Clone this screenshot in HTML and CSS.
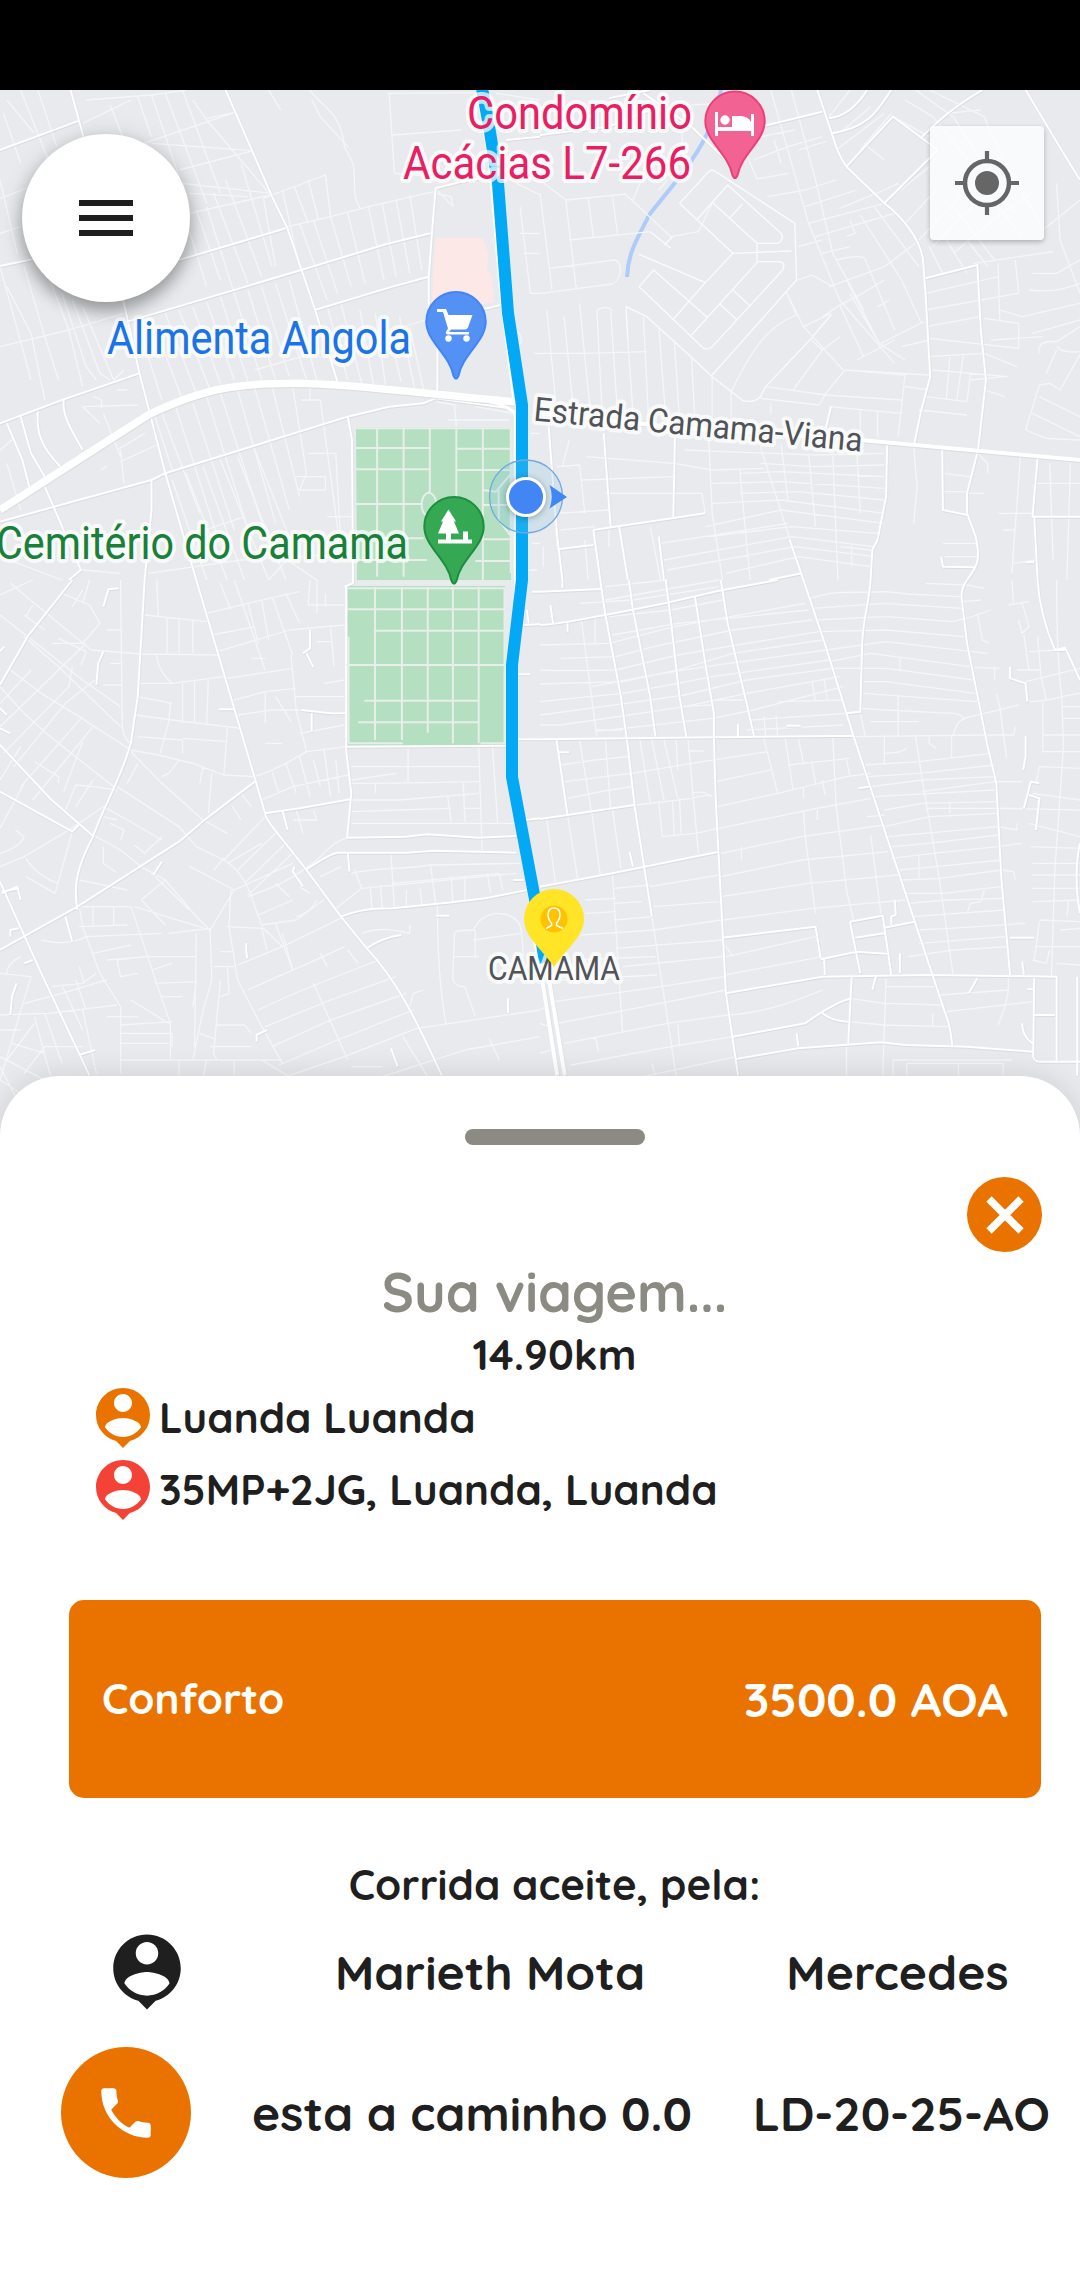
FILE: index.html
```html
<!DOCTYPE html>
<html lang="pt">
<head>
<meta charset="utf-8">
<title>Sua viagem</title>
<link rel="stylesheet" href="styles.css">
</head>
<body>
<div class="status-bar"></div>
<main class="map">
  <svg class="map-canvas" viewBox="0 90 1080 1060" width="1080" height="1060">
    <defs>
      <path id="pin" d="M0-29.5A29.7 29.7 0 0 0-29.7 0C-29.7 20-7 32-2.6 54Q0 60 2.6 54C7 32 29.7 20 29.7 0A29.7 29.7 0 0 0 0-29.5Z"/>
    </defs>

    <!-- parks and blocks -->
    <path class="park" d="M356 427.500H511V580H357ZM348 586H505V745.500H348Z"/>
    <path class="clinic" d="M435 238H483L489 255 487 270 492 275 494 302 431 314Z"/>
    <path class="river" d="M721 90C715 130 693 160 674 184L649 215C640 235 628 250 627 277"/>

    <!-- north-west -->
    <g transform="translate(0 80) scale(.34439 .33333)">
      <g class="minor">
        <path d="M0 355 110 312M0 460 60 440M60 30 140 240M110 30 165 200M10 100 60 250M0 300 50 520M20 60 100 160M250 60 440 45 540 30M240 130 380 60M320 75 360 180M400 50 440 170M440 45 520 290M480 40 600 370M530 30 640 340"/>
        <path d="M390 200 680 98M440 190 735 212M520 270 735 212M530 310 790 340M550 340 720 350M550 400 785 345M560 60 600 120 790 350M600 115 680 98"/>
        <path d="M540 420 600 620M570 390 640 600M600 380 680 640M620 340 720 610M655 300 760 590M700 250 790 560M765 355 800 560M820 330 870 560M855 320 895 430M895 300 925 420M765 355 790 345 945 285 960 410M835 440 960 410 1070 380 1260 335"/>
        <path d="M870 430 950 660M910 420 980 640M960 410 1020 620M1010 400 1060 610M1070 380 1115 600M1110 370 1150 590M1150 360 1190 580M1190 345 1225 570"/>
        <path d="M900 30C930 80 990 90 1000 200L1025 250C1035 300 1020 340 1045 385M905 60 930 110 1010 200M1130 40 1145 280M1140 165 1340 150M1125 40 1390 38M1145 280 1250 290M1265 325 1315 380 1310 350 1265 340"/>
        <path d="M0 800 60 785 200 750 360 700M0 560 60 785 90 900M20 620 90 760 130 960M70 560 130 770 170 900M130 560 200 750 240 920M180 640 250 860 280 900M210 660 290 880 320 900M240 680 330 900 360 870"/>
        <path d="M400 730 470 960M440 715 530 960M480 700 570 940M520 690 610 930M560 680 640 910M600 665 680 900M640 650 720 905M680 640 760 900M720 630 800 900M760 620 840 890M800 610 890 900M840 600 920 900M740 870 1050 780 1235 720M950 680 1010 900M990 670 1050 910M1045 690 1085 920M1090 700 1120 920M1125 740 1165 905M1160 710 1205 930M1190 740 1230 930"/>
        <path d="M240 980 400 975M270 950 295 960V985M340 930 370 930M240 980 290 1030M340 1110 420 1060M350 1145 455 1095M300 1000 350 1130M290 1170 310 1160M0 1110 40 1075M20 1150 60 1290M350 1110 360 1210"/>
        <path d="M450 1010 500 1170M470 1000 580 1300M510 980 640 1400M560 970 680 1350M600 950 730 1380M640 940 770 1360M690 930 800 1330M740 925 840 1290M790 920 870 1250M850 920 890 1180 870 1230H945V1190L860 1190M875 960H930M900 920V960M895 1120H975L990 1400M950 1310H1020M930 960 985 1380M1300 1020H1480M1380 980 1490 1000M1265 965 1320 975 1325 1040"/>
        <path d="M500 1200 600 1500M540 1180 660 1500M590 1160 710 1500M640 1140 780 1500M690 1130 830 1500M740 1110 870 1450M540 1370 710 1310M430 1480 700 1440 1020 1420M780 1500 850 1420M820 1430 920 1500M0 1430 180 1500M240 1470 350 1480"/>
        <path d="M1510 460H1568M1520 520H1568M1510 380 1540 640M1540 640H1568M1490 750C1520 760 1520 790 1500 800M1550 820H1568M1470 150 1568 100M1460 200 1568 280M1500 310 1568 345M1540 1060H1568M1540 1200 1568 1210M1545 1390H1568M1535 1470H1560M780 30 815 90M1440 40 1568 60"/>
      </g>
      <g class="street">
        <path d="M205 30 245 180 360 670 405 880 480 1180 570 1500M0 210 230 122M0 558 130 530M520 540 830 445M655 30 790 350 835 445 915 690 980 905M370 725 875 570 1120 493 1250 460M915 690 1130 623 1245 590M1265 325 1340 305 1420 290M1265 325 1255 450 1245 590V690L1270 760V935M1455 675 1350 700"/>
        <path d="M0 1030 180 960 405 880M185 960C180 1000 200 1040 240 1110M60 1010 90 1120 130 1190M110 995C105 1060 120 1100 175 1160M20 1030 65 1140 85 1220M0 1325 440 1200 480 1180 1010 1010 1130 980 1230 970 1265 955M440 1200 440 1290 420 1500M130 1220 235 1470 200 1500M1010 1010 1022 1080 1025 1500"/>
        <path d="M1385 40 1420 250 1450 620 1490 960M1495 990V1500M1470 180 1568 170M1265 955 1480 985"/>
      </g>
      <path class="avenue" d="M0 1290 430 1005C600 920 700 910 860 910S1300 950 1495 965"/>
      <path class="ramp" d="M1420 965C1460 970 1480 985 1495 1000"/>
      <g class="park-path">
        <path d="M1033 1045H1483V1480M1095 1045V1490M1172 1045V1490M1248 1045V1240M1325 1045V1250M1402 1045V1500M1033 1104H1250M1325 1106H1480M1033 1168H1250M1325 1170H1480M1033 1272H1225M1400 1275H1480M1033 1375H1230M1400 1378H1490M1033 1440H1240M1380 1443H1490M1400 1230 1440 1235 1485 1180M1448 1230V1320L1485 1370M1245 1238C1220 1240 1215 1300 1245 1310S1275 1240 1245 1238"/>
      </g>
    </g>

    <!-- north-east -->
    <g transform="translate(540 80) scale(.34439 .33333)">
      <g class="minor">
        <path d="M0 300 75 360 250 342M0 340 35 630M75 360 105 625M140 355 155 470M210 345 225 460M85 480 320 455M30 565 215 540C240 540 240 600 210 612L0 640M245 340 380 470 460 455 500 370M270 360 290 310M345 330 370 300M410 130 420 300M440 75 520 70"/>
        <path class="lane" d="M405 370 490 275Q500 265 515 278L740 430 745 600 500 885M405 370 560 520 480 608 288 523M455 420 545 315 700 460Q710 480 690 490H630L500 367M550 415 588 372M630 490V548L440 765M560 520 730 513M320 455 380 505M360 495 385 470M288 620 330 570 485 712 M288 620 470 800Q485 815 500 800L705 570Q715 545 690 545H630M388 717 480 608M520 670 572 720M560 630 608 676M250 680 310 710 440 832 500 890 590 962Q620 970 640 950L655 920 785 778 845 705 M250 680 255 780"/>
        <path d="M670 30 780 430 870 660 1030 850M730 30 800 300 850 520 940 690M590 200 630 297 720 280M620 240 720 200 820 170M640 170 740 150M660 350 770 330 860 300M680 180 700 250M750 210 830 185M770 380 920 330M780 430 1000 370M800 470 1030 400M750 500 820 480M870 385 1000 330 1040 310M820 520 900 500M840 620 1000 560 1090 490M860 540Q940 520 945 540L1030 750M890 600 985 790M930 405 1050 600 1105 725M970 380 1100 560M900 420 915 460 890 470M750 600 790 585 850 620M820 710 870 675 920 650 1000 600M765 740 845 700M715 635 765 740 880 870M870 675 940 830M900 640 985 790 1060 840M980 680 1015 660M990 790 1115 725M1050 800 1130 780M920 840 1030 780M745 705 715 635M745 705C650 740 600 840 555 935M785 778 820 810 735 930M820 810 870 770M655 920 830 945 1050 960M640 955 810 975 830 940 885 870 1130 885M500 890V1010M555 935V1010M885 870 1060 885 1040 1070M670 970V1000M1060 920 1130 930"/>
        <path d="M840 110 900 30M870 160 960 80M860 210 1000 100M890 260 960 330M930 210 1020 100M940 190 1000 240M1025 110 1130 170M1060 60 1140 110 1260 260M1090 30 1200 110 1380 400M1130 30 1290 110 1310 160 1420 380M1180 100 1280 90M1000 370 1130 260M1060 430 1150 330M1100 480 1220 350 1340 230M1140 500 1300 330 1360 260M1200 520 1340 400 1440 330M1130 500 1170 580M1180 480 1240 580M1240 480 1300 560M1200 380 1320 540M1300 340 1400 470M1380 280 1460 450 1568 360M1260 550 1490 515M1120 640 1330 590M1120 690 1390 640M1120 740 1280 710M1130 775 1390 805V730L1290 715M1380 540 1390 640M1330 550 1335 720M1500 310 1510 480 1568 640M1430 580 1500 580 1568 540M1420 630Q1500 640 1568 610M1335 690 1400 710 1568 670M1430 760 1568 720M1450 820Q1440 780 1500 785L1568 740M1500 800Q1520 820 1568 815M1570 820 1510 930M1500 810 1470 880M1450 915 1480 910 1510 930M1450 915 1410 1050 1470 1075 1568 1080M1450 950 1568 1010M1430 1000 1568 1070M1130 830 1290 820M1140 870 1360 890M1290 820 1385 860M1230 820 1210 960M1190 830 1180 960M1120 950 1240 965 1250 880M1100 990 1240 1005M1290 930 1350 950M840 980 1050 1000M930 990V1070M980 990V1070M1310 780 1460 770M1250 900 1350 890"/>
        <path d="M20 690 45 960M70 710 95 970M115 670 130 830 145 980M165 690 180 990M205 690 225 1000M165 690 Q190 675 210 690M255 780 270 1000M300 710 315 1010M345 740 365 1010M390 780 405 1020M440 830 450 1030M0 820H130L310 815"/>
        <path d="M25 1040 50 1400M85 1080 65 1160M50 1160 115 1155 130 1300M135 1130 390 1150 500 1170 650 1165M120 1200 390 1190M190 1240 470 1240 480 1300M50 1300 200 1290M60 1350 160 1340M640 1100 760 1490M490 1080 500 1300 530 1500M580 1170 610 1500M700 1090 720 1260M780 1120 800 1340M850 1120 865 1500M920 1110 930 1300M420 1110 800 1125 1000 1120M640 1150 790 1160 1000 1155M580 1180 700 1175 1000 1190M500 1210 700 1205 1000 1225M580 1240 750 1235 1000 1260M500 1270 700 1260 1000 1300M480 1340 700 1290 1000 1330M490 1370 730 1340 980 1360M350 1390 600 1350 720 1330M360 1440 730 1370 970 1400M370 1470 740 1400 970 1430M540 1480 750 1430 960 1460M1085 1100 1095 1220 1085 1330M1240 1240H1290M1270 1120 1300 1150V1180M1170 1180 1250 1190M1170 1235H1240M1330 1300H1430M1395 1130 1370 1480M1480 1150 1490 1440M1540 1150 1530 1500M1440 1210H1568M1345 1350H1380M1375 1450 1440 1440M1170 1390H1270M1175 1430H1270M870 1400 960 1410M905 1390V1460M130 1380 140 1500M200 1350V1400M320 1340 350 1500M10 1400V1460"/>
      </g>
      <g class="street">
        <path d="M0 165 200 140 320 90M320 30 200 55M300 40 440 140 540 240M640 140 820 95M805 30 860 200Q875 240 890 260L1000 370C1050 410 1110 480 1113 550L1120 650 1133 890 1105 1000 1087 1090M1285 30C1200 80 1150 130 1110 170M1020 30C980 90 960 140 850 160M950 30C920 80 880 110 840 115M890 260 1025 110 1155 210 1000 370M1410 30 1520 220 1568 300M1120 595 1270 555 1280 750 1295 900 1272 1110 1240 1240 1240 1300 1265 1370C1280 1440 1270 1460 1240 1500M1168 1110 1170 1290 1240 1305M1165 1430 1170 1460 1260 1462M1008 1095 1005 1250 980 1380 965 1410 960 1500M845 980 830 1045M1445 1135 1430 1310H1568M1435 1310 1445 1500M1410 1447H1435"/>
        <path d="M185 1060 205 1340M392 1075 387 1310M155 1350 480 1300M155 1350 175 1500M230 1340 255 1500M345 1370 360 1500M725 1380 765 1500M50 1408 155 1395M25 1040 50 1370 65 1500M665 1500 760 1480"/>
      </g>
      <path class="avenue-thin" d="M0 1000 420 1045 930 1080 1568 1140"/>
    </g>

    <!-- south-west -->
    <g transform="translate(0 580) scale(.34439 .33333)">
      <g class="minor">
        <path d="M0 45 95 0M30 10 170 130 265 210M0 105 130 210 240 300 350 380M70 170 170 260 350 440M30 270 120 340 230 410 380 510M0 320 70 400 140 465 330 620M75 110 95 75M70 105 130 150M180 40 260 75 290 130 240 190 150 190M240 70 260 0M170 175 250 215 235 255M210 80 240 30M0 370 90 270M0 440 180 260 250 190M10 520 200 320 210 260M40 560 190 370 275 300M60 620 240 410M95 660 270 440M100 545 170 590V610M185 635 240 485M0 745 75 600M0 600 60 500"/>
        <path d="M220 615 270 620 340 630M220 615 190 690M340 620 430 680 520 740 570 800 650 840M300 680 370 720 470 780M270 600 220 680M380 515 470 610 590 720 660 760M400 550 370 610M300 710 340 720M320 730 360 750 350 780M270 765 350 810 410 860 480 900M300 800V850L335 875M390 795 420 820 470 770M75 835Q110 890 170 910M0 860 70 830 200 750 300 680M0 820Q60 800 70 770L45 750M75 890 160 940M160 940 210 755"/>
        <path d="M350 0 355 440Q360 480 380 490M310 150H355M320 250H355M300 315 355 315M265 210 410 222 640 225M420 105 600 125M455 0 460 110M485 115V220M520 120V220M560 120V220M400 350 500 370M455 225C460 270 480 290 500 310L400 310M500 310 650 290M530 310V430M565 305V430M605 300 600 430M495 370 490 430M395 405 500 420 700 445M490 425 465 520M400 470 530 480M530 480V520M530 475 660 485M660 445 650 585M380 510 460 525 560 550 650 585 740 590M520 540 490 580 470 590M590 560 580 610M615 580 605 700"/>
        <path d="M600 100 740 65 870 35M640 10 670 90M680 0 770 270M720 70 750 190M760 60 780 180M790 50 850 225M830 40 870 130M615 165 740 140M630 215 840 150 1000 135M660 295 850 265M730 235H770M680 360 770 335 860 325M690 405 790 390 870 390M770 335V430M800 350 845 425M845 225 860 390 890 515M770 490H820M855 350H1000M870 460 1000 435M900 0 895 75M895 75H1000M920 100V0M945 40V80M920 185H960M960 145 970 260M940 310 1000 300M740 590C800 570 850 540 890 515L1005 500M760 660 850 620 1010 585M790 575 810 640M830 550 860 640M870 530 900 650M910 540 930 620M940 505 960 650M975 540 985 640M700 640 730 680M675 680 700 720"/>
        <path d="M770 710 650 840 665 850C690 870 720 910 740 980L760 1035M800 760 690 870M830 790 710 910M850 820 720 945M650 835 620 870M660 850 760 790M590 880 680 930 850 850M390 980 610 1050 680 930M410 960 480 900 570 1010 610 1050M410 960 480 1035M440 880 550 990M550 860 590 880M670 930 665 1040 690 1200 750 1320 820 1450M720 950C800 920 850 900 930 830Q980 775 1010 775M930 890 990 860M750 1005 850 960M860 1010Q900 1000 920 960M800 910 840 950M870 920 900 940M760 1035 860 1020 940 960M800 1030 850 1170M660 1040 760 1045 775 1110M640 1115H680"/>
        <path d="M230 900 370 930M225 980 380 980 390 1010C420 1100 450 1200 495 1330V1440M230 1040 370 1035M270 980V1035M330 980V1035M230 980 240 1040 290 1180 350 1280V1480M120 1080Q200 1100 250 1070L470 1060M270 1120 380 1095M340 1140 350 1190 400 1180M340 1140 380 1135M310 1140 430 1130 570 1130M440 1170 500 1150M450 1210 570 1205 560 1280M470 1250H530M490 1060 610 1045M570 1060 565 1400M610 1045 615 1200 590 1290 560 1440M620 1160H680M660 1160 665 1240 640 1250M640 1200 620 1420 630 1440"/>
        <path d="M0 1180 90 1190M20 1180Q20 1150 60 1130M90 1190 0 1500M0 1305 140 1300 340 1275M70 1270 180 1240 310 1200M150 1220 240 1210 280 1180M180 1215 240 1350M220 1200 250 1290M230 1160 245 1210M240 1290 280 1480M130 1300 180 1450M100 1310 150 1500M35 1390 130 1420M0 1430 130 1500M0 1350 60 1350M20 1440 100 1330M70 1480 130 1400H240M350 1440H820M350 1360H500V1400M350 1390H490M380 1260 490 1330M310 1310H400M350 1335 500 1325M580 1360 620 1375M630 1335H710L730 1360M610 1400H730M760 1440 840 1490M680 1440V1487M600 1440 590 1487M520 1440V1487M0 1500 60 1540M0 1460 50 1560"/>
        <path d="M720 1230C820 1180 860 1170 1000 1100M750 1290C850 1240 950 1200 1100 1140M770 1340 960 1260 1150 1190M790 1400 960 1320 1180 1240M810 1455 980 1380 1200 1290M830 1490 1000 1430 1210 1345 1568 1290M690 1155 820 1100 1000 1010M760 1040 820 1100M820 1060 850 1170M930 1120 950 1160M910 1210 1010 1440M1010 1110 1040 1150M1050 1060C1100 1040 1150 1050 1190 1060V1035M1170 1370 1240 1487M1110 1490 1350 1410 1568 1370M1420 1375 1450 1440M1020 1460H1110M1190 1280 1200 1240 1230 1230M1270 970C1270 1150 1280 1250 1295 1330"/>
        <path d="M1380 1310 1350 1220Q1310 1220 1315 1180L1320 1060Q1320 1050 1375 1050 1390 1010 1440 1000 1510 1000 1515 1060L1520 1130M1315 1130H1390M1380 1050V1130M1375 1080 1515 1060M1020 560H1390M1020 610H1110L1390 605M1020 600 1150 580M1020 660 1160 660 1390 640M1020 695 1160 690 1310 685M1020 730H1500M1185 505V605M1390 500 1400 810M1430 500 1445 730M1300 650 1310 725M1345 605 1350 725M1350 685H1395M1090 610V640M1135 820 1145 980M1030 870 1050 925 1500 880M1020 880C1100 860 1160 870 1250 855L1510 850M1250 855 1265 970M1140 910 1450 880M970 990 1050 925M1075 920 1080 985M1105 915 1110 985M1180 930V980M1220 925 1225 975M1310 890 1315 965M1350 890V960M1415 880 1425 940M1450 880 1460 930M850 720H920M860 690 880 760M910 690 920 720"/>
      </g>
      <g class="street">
        <path d="M210 0 80 170 0 315M420 0 400 350 380 490C350 600 300 680 270 770 230 850 210 910 225 990M0 495 150 660 270 768M0 635 210 755 228 735M0 1110 225 980 520 785 600 715 740 605M570 0 770 700C770 720 800 750 890 870L990 1010 1065 1105C1150 1200 1200 1300 1283 1487M0 905 120 1180 260 1487M1005 20 1005 510 1020 640 1008 773 1180 770 1240 763 1390 773 1500 768M890 868Q960 820 980 818H1180L1260 812 1500 818M990 1010C1030 995 1060 985 1140 985L1300 968 1410 955 1530 930M1065 1105C1100 1080 1130 1070 1165 1065M770 700 870 685 1018 658M820 690 835 750M1005 500 1470 497M1010 820 1015 875M1025 0V10L1000 20"/>
        <path d="M635 388H680M875 390 960 400H1003M905 400V455M900 150V205L880 220M890 220 910 262M855 860 850 875 880 920M445 885 470 845M190 1010 210 1085M715 1090V1115L718 1135M1135 1405 1155 1460M1475 1255V1300M1265 1007H1305M745 1385V1365L775 1350M300 215 285 250 280 315M300 80 315 28 345 25M5 940 50 920 60 960M5 935 55 925M30 1070V1050L55 1045M230 1425 277 1410M70 1150 95 1140M48 1210 35 1250 30 1305M0 385 20 405M0 445 30 460M0 215 12 200"/>
        <path d="M1495 60V0M1520 135 1568 133M1505 283H1540M1500 478H1568M1525 720 1568 715M1530 90 1535 130M1545 35H1568M1500 730 1560 1100M1490 900H1520"/>
      </g>
      <g class="park-path">
        <path d="M1010 25H1465V490H1395M1010 88H1465M1085 152H1465M1005 255H1465M1058 362H1390M1040 427H1390M1012 490H1170M1089 20V480M1167 20V480M1242 20V458M1315 20V490M1390 20V490M1012 170V490M1040 10H1485"/>
      </g>
    </g>

    <!-- south-east -->
    <g transform="translate(540 580) scale(.34439 .33333)">
      <g class="minor">
        <path d="M190 20 370 0M190 60 520 0M115 70 270 60 520 20M200 110 380 90 530 60M0 195 200 190 390 140 770 70M210 165 400 130 780 90M60 235 220 230 330 200 560 150 790 120M0 270C100 275 130 270 220 270L400 225 600 190 810 155M0 312 240 305 400 270 560 220 820 180M150 320 300 290 480 260 830 210M0 365C50 360 150 350 240 340L400 310 500 290 840 240M0 405 250 370 420 345 600 300 850 265M0 435 60 435 160 420 420 380 600 340 870 290M160 455 500 415 620 390 880 320M500 360 590 360M410 380 500 375M165 450H240M610 420 890 400M600 450 880 435M690 365 880 360M790 305 800 365M825 300 835 360M120 120 165 470M160 110V190M650 410 655 470M685 405 690 465"/>
        <path d="M785 55C850 30 900 40 1005 35L1070 42 1220 50M790 85 1000 70 1225 85M800 120 1005 110 1200 125 1230 115M810 155 1005 150 1230 170M830 210 1005 185 1300 220M840 245 960 220 1250 260M850 265 1005 265 1260 300M940 305 1005 305 1265 340M940 340 1270 365M930 385 1005 390 1200 400Q1220 400 1230 415L1390 375M960 425H1100M930 400 945 470M1040 350V470M1045 230V275M1120 10 1240 15 1290 25M1225 65 1280 60M1225 120 1310 90M1270 100 1285 180 1305 190M1370 0 1375 70M1360 75 1420 65M1400 70 1420 140 1400 160 1390 120M1405 165 1420 270M1385 270H1450M1445 170 1455 290 1470 360M1420 215 1500 210M1320 260V300M1260 262 1335 265M1325 340 1335 380 1355 535M1410 305 1568 265M1420 365C1480 365 1520 345 1568 340M1460 365V515M1500 0C1500 100 1500 230 1515 350L1520 500 1495 870 1485 1190M1515 380H1568M1515 415H1568M1520 465H1568M1460 465H1520M1460 515H1568"/>
        <path d="M60 555 160 540 255 530M70 605 265 580 440 550 660 515M80 655 200 630 270 620M115 480 150 700M190 480 205 690M290 480 320 670M325 480 360 660M360 480 400 655M395 480 400 570M430 480 460 820M430 513H475M280 675 440 655Q500 640 500 650M440 640Q480 630 495 650M345 670 355 770 450 760 520 745M385 665 390 765M405 655 410 765M510 605 670 570M515 680 690 640 890 590 960 580M520 745 780 690 960 655M525 820 760 770 1000 735M525 890 760 840 1010 815M525 950 780 910 1040 885M530 1020 790 985 1060 960M330 980 520 965M320 920 520 885M530 1085 560 1130M330 1050 525 1020M540 1130 800 1070M535 1185 820 1130M650 475 690 640M712 475 735 630M750 475 765 550M720 555 900 535M790 550 800 610M850 470 860 680 890 930 910 1020M890 540 900 590M765 690 770 770 800 1000M820 600 828 645M805 690V720M765 620V655M585 800V840M960 765 990 1000M20 720 45 910M80 705 110 900M150 695 175 885M210 685 235 865"/>
        <path d="M915 470 1300 465 1375 465 1380 440M1200 465Q1210 420 1235 415M1195 465V535M1090 465 1110 600 1160 900 1200 1190M1130 465V490L1150 505M1000 470V550M1000 520Q1050 520 1065 505M945 555 1100 545 1310 520M950 590 1100 580 1320 555M960 620 1110 600 1320 590M970 650 1320 630M1000 690 1110 670 1330 665M1110 635 1320 605 1400 605M1120 685 1400 685M1000 740 1130 710 1330 700M1010 770 1330 740 1385 750V730M1020 800 1130 790 1330 765M1020 835 1140 820 1330 800 1400 790M1040 870 1150 860 1340 840M1050 900 1160 895 1340 870 1375 875 1380 900M1060 940 1170 940 1340 920M1070 970 1180 960 1345 955M1080 1010 1350 990M1090 1050 1190 1045 1410 1030M1100 1090 1350 1070M1070 1130 1200 1110 1360 1100M1100 825V895M1190 670V700M1290 930 1280 965 1250 970 1240 1000M950 710 1000 705"/>
        <path d="M1450 560 1568 565M1450 560 1440 610M1330 685 1568 690M1430 640 1568 660M1370 605H1400M1420 730 1568 770M1425 800 1568 805M1430 850H1568M1430 885H1568M1430 925H1568M1430 965 1568 960M1450 1020 1568 1025M1440 1100H1568M1430 1140 1470 1150 1480 1110M1450 1025 1435 1140M1510 1050 1568 1045M1500 1150 1568 1155M1535 960 1530 1010"/>
        <path d="M210 880 240 1360M325 1010 395 1487M215 925 320 915M130 960 220 955M215 970 295 965M215 1020 330 1010M130 1000 220 995M120 1065 330 1050M220 1105 530 1080M100 1140 335 1130M240 1160 530 1130M60 1200 340 1185M40 1265 350 1220 535 1190M50 1330 350 1270 540 1230M70 1390 370 1330 545 1305C650 1300 750 1260 820 1230M90 1455 380 1400 560 1370M300 1490 570 1430M160 1370 170 1415M400 1330 405 1395M325 1450 335 1487M1005 1195 995 1487M890 1400V1487M900 1255 1000 1270 1170 1275M895 1325 1000 1335 1190 1340M1005 1220 1145 1220M1160 1245 1360 1230M1180 1295 1430 1265M1360 1220Q1360 1260 1330 1335M1140 1300V1340M1025 1440H1370M1065 1450H1345V1487M1065 1450V1487M1025 1440V1487M1215 1450V1487M0 1330 25 1340M0 1420 30 1410M0 1290 20 1280M1360 1190V1225"/>
      </g>
      <g class="street">
        <path d="M0 478 510 472 910 467M0 135C80 130 100 120 190 105L370 68 520 32 690 0M0 35 180 27M65 0V25M175 0 190 105 235 350 255 500 275 680 325 1010M258 0 270 90 320 350 335 470M365 0 380 120 405 350 425 470M450 50 480 250 505 400 505 480 510 650 525 950 540 1240 575 1487M525 0 545 130 600 370 622 470M765 0 830 200 910 467 1090 1030 1180 1310Q1190 1330 1197 1395M960 0C955 80 935 120 935 210L930 395 890 400M1240 0 Q1220 30 1225 60L1240 190 1300 500 1325 610 1340 900 1365 1185M1445 0Q1450 100 1495 210L1525 203 1568 300M1495 210H1525"/>
        <path d="M0 920 210 880 520 815M0 717 80 705 275 675M48 480 80 705M55 517H85M260 815 270 860M575 433V470M715 437H757M925 625 955 620M530 1073 800 1040 815 1135M815 1138 920 1115 1015 1122M900 1025 995 1007 1020 1185M900 1025 930 1180M915 1073 1000 1060M1000 1043 1088 1025M1030 960 1033 1005 1020 1010V1035M1045 1120V1180M825 1135 827 1185M540 1240 820 1190 1130 1185 1500 1190V1445M905 1190 895 1390M560 1370 770 1330Q860 1265 905 1255M820 1300Q850 1325 895 1325M570 1437 750 1405 990 1387 1060 1395 1240 1400 1430 1415M745 1360 750 1400M975 1190 965 1230M1270 1195 1245 1240M1365 1073H1435M1400 1145 1405 1185M1435 1195 1432 1430Q1435 1445 1450 1445H1568M1435 1305H1495M1400 1330Q1400 1370 1430 1390M1415 1228H1435M1560 1190V1487M1568 790C1555 850 1555 930 1568 1000"/>
        <path d="M1410 467V530L1403 570M1450 610 1425 605 1405 685M1420 645 1450 655 1440 750M1365 260V295L1410 310 1415 365M30 75 38 130M80 130V155"/>
      </g>
      <path class="highway" d="M-30 1000 8 1210 50 1487M-8 1010 28 1210 72 1487"/>
    </g>

    <polyline class="route" points="482,88 490,132 498,183 508,313 522,405 522,580 512,665 512,777 536,905 545,963"/>

    <g class="label place"><text x="488" y="980" textLength="132" lengthAdjust="spacingAndGlyphs">CAMAMA</text></g>
    <g class="label poi">
      <text class="hotel" x="467" y="129" textLength="225" lengthAdjust="spacingAndGlyphs">Condomínio</text>
      <text class="hotel" x="403" y="179" textLength="288" lengthAdjust="spacingAndGlyphs">Acácias L7-266</text>
      <text class="shop" x="107" y="354" textLength="304" lengthAdjust="spacingAndGlyphs">Alimenta Angola</text>
      <text class="green" x="-4" y="559" textLength="412" lengthAdjust="spacingAndGlyphs">Cemitério do Camama</text>
    </g>
    <g class="label road"><text transform="translate(533 420.500) rotate(5.4)" textLength="330" lengthAdjust="spacingAndGlyphs">Estrada Camama-Viana</text></g>

    <g transform="translate(735 121)">
      <use href="#pin" class="pin-hotel"/>
      <path fill="#fff" d="M-20-9h3V6h14V-5H6Q14-4 16 1V-7h3V15h-3V10h-33v5h-3Z"/><circle cx="-10" cy="-1" r="4.7" fill="#fff"/>
    </g>
    <g transform="translate(456 321.500)">
      <use href="#pin" class="pin-shop"/>
      <path fill="#fff" d="M-19-12.500h9l2.500 6h24L12 6q-1 2-3 2H-5l-2 2.500H13V13H-8q-3 0-2-3l2-3-5-16.500h-6Z"/><circle cx="-7.500" cy="17" r="3.200" fill="#fff"/><circle cx="10.500" cy="17" r="3.200" fill="#fff"/>
    </g>
    <g transform="translate(454 526.500)">
      <use href="#pin" class="pin-park"/>
      <path fill="#fff" d="M-5.500-17 2-5H0L5 7H-3v6H9V5h5v8h4v4H-16v-4h8V7H-16l5-12h-2Z"/>
    </g>

    <!-- current position -->
    <circle class="accuracy" cx="526" cy="496.500" r="36.500"/>
    <circle class="dot" cx="526" cy="497" r="18.500"/>
    <path fill="#4286f5" d="M549.500 485 567 497 549.500 508.500Q554 497 549.500 485Z"/>

    <!-- destination -->
    <g transform="translate(554 919)">
      <path fill="#ffe526" d="M0 48C-10 32-30 18-30 0A30 30 0 0 1 30 0C30 18 10 32 0 48Z"/>
      <circle r="13.500" fill="#ffc200"/>
      <path class="avatar" d="M-8 9.500-2.500 6.500V4C-7.500-1-7.500-11 0-11S7.500-1 2.500 4V6.500L9 9.500"/>
    </g>
  </svg>

  <button class="menu-button" aria-label="Menu"><span></span><span></span><span></span></button>
  <button class="locate-button" aria-label="Localização">
    <svg width="66" height="66" viewBox="-33 -33 66 66">
      <circle r="12" fill="#666"/>
      <circle r="22" fill="none" stroke="#666" stroke-width="4.500"/>
      <path d="M0-32v9M0 23v9M-32 0h9M23 0h9" stroke="#666" stroke-width="4.200"/>
    </svg>
  </button>
</main>

<section class="sheet">
  <svg class="symbols" width="0" height="0">
    <symbol id="person-pin" viewBox="0 0 24 24"><path d="M12 2c-4.970 0-9 4.030-9 9 0 4.170 2.840 7.670 6.690 8.690L12 22l2.310-2.310C18.160 18.670 21 15.170 21 11c0-4.970-4.030-9-9-9zm0 2c1.660 0 3 1.340 3 3s-1.340 3-3 3-3-1.340-3-3 1.340-3 3-3zm0 14.300c-2.500 0-4.710-1.280-6-3.220.030-1.990 4-3.080 6-3.080 1.990 0 5.970 1.090 6 3.080-1.290 1.940-3.500 3.220-6 3.220z"/></symbol>
  </svg>
  <div class="handle"></div>
  <button class="close" aria-label="Fechar">
    <svg width="38" height="38" viewBox="0 0 38 38"><path d="M3 3 35 35M35 3 3 35" stroke="#fff" stroke-width="7.500"/></svg>
  </button>
  <h1 class="title">Sua viagem...</h1>
  <p class="distance">14.90km</p>
  <div class="stop"><svg class="origin"><use href="#person-pin"/></svg><span>Luanda Luanda</span></div>
  <div class="stop"><svg class="target"><use href="#person-pin"/></svg><span>35MP+2JG, Luanda, Luanda</span></div>
  <div class="fare"><span class="tier">Conforto</span><span class="price">3500.0 AOA</span></div>
  <p class="accepted">Corrida aceite, pela:</p>
  <div class="driver">
    <svg class="driver-icon"><use href="#person-pin"/></svg>
    <span class="name">Marieth Mota</span>
    <span class="car">Mercedes</span>
  </div>
  <div class="contact">
    <button class="call" aria-label="Ligar">
      <svg width="66" height="66" viewBox="0 0 24 24"><path fill="#fff" d="M6.620 10.790c1.440 2.830 3.760 5.140 6.590 6.590l2.200-2.200c.270-.270.670-.360 1.020-.240 1.120.370 2.330.570 3.570.570.550 0 1 .450 1 1V20c0 .550-.450 1-1 1-9.390 0-17-7.610-17-17 0-.550.450-1 1-1h3.500c.550 0 1 .450 1 1 0 1.250.200 2.450.570 3.570.110.350.030.740-.250 1.020l-2.200 2.200z"/></svg>
    </button>
    <span class="progress">esta a caminho 0.0</span>
    <span class="plate">LD-20-25-AO</span>
  </div>
</section>
</body>
</html>
```
FILE: styles.css
```css
* { box-sizing: border-box; }
body {
  margin: 0;
  width: 1080px;
  height: 2280px;
  overflow: hidden;
  display: flex;
  flex-direction: column;
  background: #fff;
  color: #1f1f1f;
  font-family: Quicksand, Lato, "Open Sans", sans-serif;
  font-weight: 700;
}
button { border: 0; padding: 0; }
.status-bar { height: 90px; flex: none; background: #000; }

/* Map */
.map { position: relative; height: 1060px; flex: none; overflow: hidden; background: #e8eaed; }
.map-canvas { display: block; }
.map-canvas path, .route { stroke-linejoin: round; }
.minor path, .street path, .avenue, .avenue-thin, .highway, .ramp, .park-path path { fill: none; vector-effect: non-scaling-stroke; stroke: #fff; }
.minor path { stroke: #f5f6f8; stroke-width: 1.3; }
.minor .lane { stroke: #fafbfc; stroke-width: 1.3; }
.street path { stroke-width: 2; }
.street, .avenue, .avenue-thin, .highway { filter: drop-shadow(1px 2px 0 #d3d5d9); }
.avenue { stroke-width: 7.5; }
.avenue-thin { stroke-width: 4; }
.highway { stroke-width: 4; }
.ramp { stroke-width: 3; }
.park-path path { stroke: #e8eee9; stroke-width: 2; }
.park { fill: #b4dfc1; }
.clinic { fill: #fce8e6; }
.river { fill: none; stroke: #aecbfa; stroke-width: 4; }
.route { fill: none; stroke: #03a9f4; stroke-width: 12; }

.label text { font-family: Roboto, sans-serif; font-weight: 400; paint-order: stroke; stroke: rgba(255, 255, 255, .72); stroke-width: 8; stroke-linejoin: round; }
.poi text { font-size: 45.5px; }
.place text { font-size: 33px; fill: #505358; }
.road text { font-size: 33.5px; fill: #505358; }
.poi .hotel { fill: #e91e63; }
.poi .shop { fill: #1a73e8; }
.poi .green { fill: #188038; }
.pin-hotel { fill: #f26292; stroke: #ec407a; stroke-width: 2; }
.pin-shop { fill: #5491f5; stroke: #4285f4; stroke-width: 2; }
.pin-park { fill: #34a853; stroke: #1e8e3e; stroke-width: 2; }
.accuracy { fill: rgba(113, 190, 232, .2); stroke: #72aadc; stroke-width: 1.3; }
.dot { fill: #4286f5; stroke: #fff; stroke-width: 3; filter: drop-shadow(0 1px 3px rgba(0, 0, 0, .3)); }
.avatar { fill: none; stroke: #fff; stroke-width: 1.5; }

.menu-button {
  position: absolute;
  left: 22px;
  top: 44px;
  width: 168px;
  height: 168px;
  border-radius: 50%;
  background: #fff;
  box-shadow: 0 9px 16px rgba(0, 0, 0, .3), 0 2px 26px rgba(0, 0, 0, .12);
  display: flex;
  flex-direction: column;
  align-items: center;
  justify-content: center;
  gap: 9px;
}
.menu-button span { width: 54px; height: 6px; background: #1f1f1f; }
.locate-button {
  position: absolute;
  left: 930px;
  top: 36px;
  width: 114px;
  height: 114px;
  border-radius: 4px;
  background: rgba(255, 255, 255, .75);
  box-shadow: 0 2px 5px rgba(0, 0, 0, .25);
  display: grid;
  place-items: center;
}

/* Trip sheet */
.sheet {
  position: relative;
  flex: 1;
  margin-top: -74px;
  padding: 53px 0 0;
  border-radius: 60px 60px 0 0;
  background: #fff;
  box-shadow: 0 0 30px rgba(0, 0, 0, .12);
  display: flex;
  flex-direction: column;
}
.symbols { position: absolute; }
.handle { width: 180px; height: 16px; margin-left: 465px; border-radius: 8px; background: #8b8b83; flex: none; }
.close {
  width: 75px;
  height: 75px;
  margin: 32px 38px 0 auto;
  border-radius: 50%;
  background: #ea7300;
  display: grid;
  place-items: center;
  flex: none;
}
.title, .distance, .accepted { margin: 0; text-align: center; white-space: nowrap; padding-left: 29px; }
.title { margin-top: 5px; font-size: 54px; line-height: 70px; color: #8b8b83; }
.distance { font-size: 42px; line-height: 53px; margin-top: 1px; }
.stop { height: 72px; padding-left: 87px; display: flex; align-items: center; font-size: 42px; line-height: 53px; white-space: nowrap; }
.stop svg { width: 72px; height: 72px; }
.stop span { padding-bottom: 1px; }
.distance + .stop { margin-top: 1px; }
.origin { fill: #ea7300; }
.target { fill: #f44336; }
.fare {
  height: 198px;
  margin: 74px 39px 0 69px;
  padding: 0 33px;
  border-radius: 15px;
  background: #ea7300;
  color: #fff;
  display: flex;
  align-items: center;
  justify-content: space-between;
  flex: none;
}
.tier { font-size: 42px; padding-bottom: 1px; }
.price { font-size: 48px; }
.accepted { margin-top: 60px; font-size: 42px; line-height: 53px; }
.driver, .contact { display: flex; align-items: center; font-size: 48px; white-space: nowrap; }
.driver span, .contact span { display: flex; justify-content: center; }
.driver { margin-top: 16px; height: 90px; padding-left: 102px; }
.driver-icon { width: 90px; height: 90px; fill: #1f1f1f; }
.name { width: 306px; margin-left: 145px; }
.car { width: 217px; margin-left: 146px; }
.contact { margin-top: 30px; padding-left: 61px; }
.call { width: 130px; height: 131px; border-radius: 50%; background: #ea7300; display: grid; place-items: center; }
.progress { width: 438px; margin-left: 62px; }
.plate { width: 293px; margin-left: 64px; }
```
